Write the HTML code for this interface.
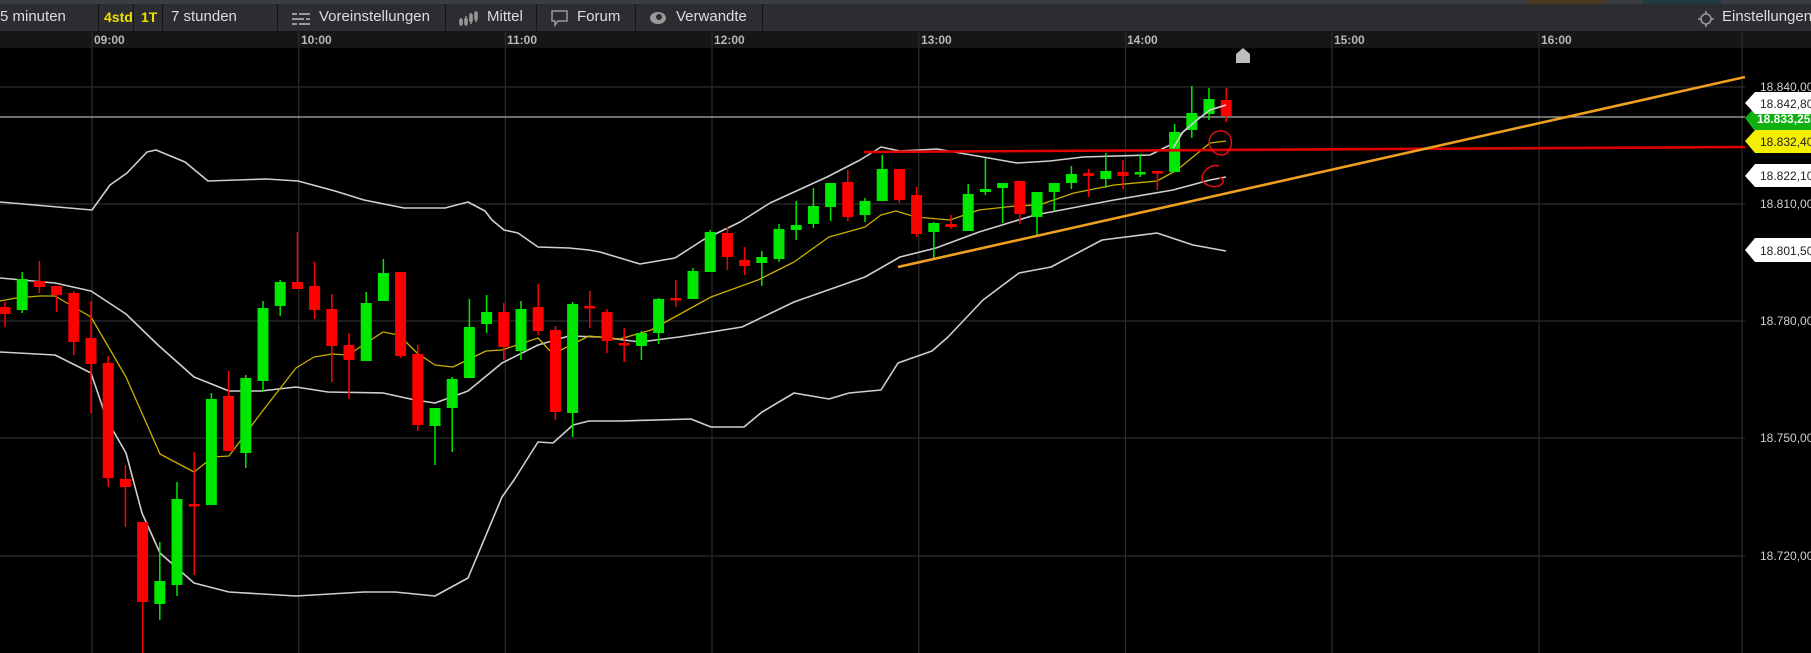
<!DOCTYPE html>
<html><head><meta charset="utf-8"><style>
*{margin:0;padding:0;box-sizing:border-box}
body{width:1811px;height:653px;background:#000;overflow:hidden;position:relative;font-family:"Liberation Sans",sans-serif}
#strip{position:absolute;left:0;top:0;width:1811px;height:4px;background:#3a3d41}
#tb{position:absolute;left:0;top:4px;width:1811px;height:28px;background:#2b2d30;border-bottom:1px solid #151515}
.it{position:absolute;top:0;height:27px;line-height:26px;font-size:15px;color:#dcdcdc;white-space:nowrap}
.sep{position:absolute;top:0;width:1px;height:27px;background:#141414}
#ta{position:absolute;left:0;top:32px;width:1811px;height:16px;background:#161616}
.tl{position:absolute;top:32px;font-size:12px;font-weight:bold;color:#b8b8b8;line-height:16px}
svg{position:absolute;left:0;top:0}
</style></head><body>
<div id="strip"></div>
<div style="position:absolute;left:1528px;top:0;width:78px;height:4px;background:#4a3a22"></div>
<div style="position:absolute;left:1643px;top:0;width:78px;height:4px;background:#1f3a42"></div>
<div id="tb">
<div class="it" style="left:0">5 minuten</div>
<div class="sep" style="left:98px"></div>
<div class="it" style="left:104px;color:#f0e000;font-weight:bold;font-size:14px">4std</div>
<div class="sep" style="left:133px"></div>
<div class="it" style="left:141px;color:#f0e000;font-weight:bold;font-size:14px">1T</div>
<div class="sep" style="left:162px"></div>
<div class="it" style="left:171px">7 stunden</div>
<div class="sep" style="left:277px"></div>
<svg style="left:292px;top:7px" width="20" height="16" viewBox="0 0 20 16"><g stroke="#999" stroke-width="2"><path d="M0 3H18M0 8H18M0 13H18"/></g><g fill="#2b2d30"><rect x="5" y="0" width="2" height="6"/><rect x="12" y="5" width="2" height="6"/><rect x="5" y="10" width="2" height="6"/></g></svg>
<div class="it" style="left:319px">Voreinstellungen</div>
<div class="sep" style="left:445px"></div>
<svg style="left:459px;top:6px" width="20" height="18" viewBox="0 0 20 18"><g stroke="#999" stroke-width="1.5" fill="none"><path d="M2 8V16M7 6V16M12 3V14M17 1V12"/><rect x="1" y="10" width="2" height="4"/><rect x="6" y="9" width="2" height="5"/><rect x="11" y="5" width="2" height="6"/><rect x="16" y="3" width="2" height="6"/></g></svg>
<div class="it" style="left:487px">Mittel</div>
<div class="sep" style="left:536px"></div>
<svg style="left:551px;top:6px" width="18" height="18" viewBox="0 0 18 18"><path d="M1 1H16V11H7L4 15V11H1Z" fill="none" stroke="#999" stroke-width="1.5"/></svg>
<div class="it" style="left:577px">Forum</div>
<div class="sep" style="left:635px"></div>
<svg style="left:649px;top:7px" width="18" height="14" viewBox="0 0 18 14"><ellipse cx="9" cy="7" rx="8" ry="6" fill="#999"/><circle cx="10" cy="6" r="3" fill="#2b2d30"/></svg>
<div class="it" style="left:676px">Verwandte</div>
<div class="sep" style="left:762px"></div>
<svg style="left:1697px;top:6px" width="18" height="18" viewBox="0 0 18 18"><circle cx="9" cy="9" r="5" fill="none" stroke="#999" stroke-width="1.6"/><path d="M9 1V4M9 14V17M1 9H4M14 9H17" stroke="#999" stroke-width="1.6"/></svg>
<div class="it" style="left:1722px">Einstellungen</div>
</div>
<div id="ta"></div>
<div class="tl" style="left:94px">09:00</div>
<div class="tl" style="left:301px">10:00</div>
<div class="tl" style="left:507px">11:00</div>
<div class="tl" style="left:714px">12:00</div>
<div class="tl" style="left:921px">13:00</div>
<div class="tl" style="left:1127px">14:00</div>
<div class="tl" style="left:1334px">15:00</div>
<div class="tl" style="left:1541px">16:00</div>
<svg width="1811" height="653" viewBox="0 0 1811 653" style="top:0">
<g stroke="#2c2c2c" stroke-width="1.2">
<path d="M92 32V653M298.7 32V653M505.4 32V653M712 32V653M918.8 32V653M1125.5 32V653M1332 32V653M1539 32V653M1742 32V653"/>
<path d="M0 87H1745M0 204H1745M0 321H1745M0 438H1745M0 556H1745"/>
</g>
<path d="M0 117H1745" stroke="#b0b0b0" stroke-width="1.2"/>
<g fill="none" stroke-width="1.6" stroke-linejoin="round">
<polyline stroke="#cfcfcf" points="0,202 92,210 110,185 127,173 147,152 156,150 185,162 208,181 266,179 298,181 335,191 364,200 404,208 445,208 468,202 485,211 492,220 504,230 518,233 538,247 569,248 589,250 600,252 640,264 675,258 703,240 740,222 770,203 827,177 860,160 881,147 900,151 937,149 983,157 1017,163 1050,161 1083,157 1150,155 1170,145 1183,132 1197,120 1210,110 1226,105"/>
<polyline stroke="#cfcfcf" points="0,278 55,283 91,291 126,314 158,345 194,377 229,391 261,391 296,387 328,392 383,393 415,400 435,403 468,391 502,363 538,345 569,336 600,337 640,342 679,337 711,332 742,327 794,302 865,277 900,257 936,248 979,232 1035,215 1114,200 1173,190 1210,180 1226,177"/>
<polyline stroke="#cfcfcf" points="0,352 55,355 91,373 107,420 126,453 142,513 160,553 194,583 229,592 296,596 364,592 395,592 435,596 468,578 502,497 514,480 538,442 553,443 573,425 589,421 620,421 691,419 711,427 744,427 762,412 794,393 829,399 849,393 881,390 898,363 932,351 948,337 983,300 1019,273 1051,267 1102,240 1157,233 1193,245 1226,251"/>
<polyline stroke="#c8b000" stroke-width="1.3" points="0,301 16,298 40,296 55,296 91,317 126,377 160,454 194,472 213,457 229,456 261,413 296,368 314,357 332,354 348,355 383,332 399,335 417,353 435,365 453,367 486,351 502,350 538,338 553,354 589,336 620,339 651,330 711,297 758,280 794,262 829,237 865,227 881,215 896,211 916,217 950,220 979,210 1015,206 1039,205 1074,193 1114,185 1157,181 1177,170 1210,143 1226,141"/>
</g>
<g id="c"></g>
<g stroke-width="1.5">
<g stroke="#ff0000" fill="#ff0000">
<path d="M5 302V327M39.4 261V293M56.6 286V312M73.8 291V355M91 301V413M108.2 356V487M125.4 465V527M142.6 522V653M194.2 452V575M228.6 371V451M297.4 232V289M314.6 262V319M331.8 294V382M349 333V399M400.6 272V358M417.8 345V431M503.8 303V360M538.2 284V335M555.4 326V420M589.8 291V328M607 309V353M624.2 328V362M675.8 280V307M727.4 227V270M744.6 247V275M847.8 170V221M899.4 169V203M916.6 187V237M951 215V229M1019.8 181V224M1088.6 169V197M1123 160V189M1157.4 171V190M1226.2 88V122"/>
<g stroke="none">
<rect x="-0.5" y="307" width="11" height="7"/><rect x="33.9" y="281" width="11" height="6"/><rect x="51.1" y="286" width="11" height="9"/><rect x="68.3" y="293" width="11" height="49"/><rect x="85.5" y="338" width="11" height="26"/><rect x="102.7" y="363" width="11" height="115"/><rect x="119.9" y="479" width="11" height="8"/><rect x="137.1" y="522" width="11" height="80"/><rect x="188.7" y="504" width="11" height="2.5"/><rect x="223.1" y="396" width="11" height="55"/><rect x="291.9" y="282" width="11" height="7"/><rect x="309.1" y="286" width="11" height="24"/><rect x="326.3" y="309" width="11" height="37"/><rect x="343.5" y="345" width="11" height="15"/><rect x="395.1" y="272" width="11" height="84"/><rect x="412.3" y="354" width="11" height="71"/><rect x="498.3" y="312" width="11" height="35"/><rect x="532.7" y="307" width="11" height="24"/><rect x="549.9" y="330" width="11" height="82"/><rect x="584.3" y="306" width="11" height="2.5"/><rect x="601.5" y="312" width="11" height="29"/><rect x="618.7" y="343" width="11" height="2.5"/><rect x="670.3" y="298" width="11" height="2.5"/><rect x="721.9" y="233" width="11" height="24"/><rect x="739.1" y="260" width="11" height="6"/><rect x="842.3" y="182" width="11" height="35"/><rect x="893.9" y="169" width="11" height="31"/><rect x="911.1" y="195" width="11" height="39"/><rect x="945.5" y="224" width="11" height="3"/><rect x="1014.3" y="181" width="11" height="33"/><rect x="1083.1" y="173" width="11" height="3"/><rect x="1117.5" y="172" width="11" height="4"/><rect x="1151.9" y="171" width="11" height="2.5"/><rect x="1220.7" y="100" width="11" height="16"/>
</g></g>
<g stroke="#00e800" fill="#00e800">
<path d="M22.2 272V313M159.8 542V620M177 482V596M211.4 393V505M245.8 375V468M263 301V392M280.2 280V316M366.2 292V361M383.4 259V301M435 408V465M452.2 377V452M469.4 299V378M486.6 295V333M521 301V360M572.6 302V437M641.4 331V360M658.6 298V344M693 268V299M710.2 230V272M761.8 251V286M779 224V262M796.2 201V240M813.4 188V228M830.6 183V221M865 198V222M882.2 155V201M933.8 222V258M968.2 184V231M985.4 158V195M1002.6 183V223M1037 192V236M1054.2 183V211M1071.4 166V189M1105.8 153V188M1140.2 154V177M1174.6 124V172M1191.8 86V138M1209 88V120"/>
<g stroke="none">
<rect x="16.7" y="279" width="11" height="31"/><rect x="154.3" y="581" width="11" height="23"/><rect x="171.5" y="499" width="11" height="86"/><rect x="205.9" y="399" width="11" height="106"/><rect x="240.3" y="378" width="11" height="75"/><rect x="257.5" y="308" width="11" height="73"/><rect x="274.7" y="282" width="11" height="24"/><rect x="360.7" y="303" width="11" height="58"/><rect x="377.9" y="273" width="11" height="28"/><rect x="429.5" y="408" width="11" height="18"/><rect x="446.7" y="379" width="11" height="29"/><rect x="463.9" y="327" width="11" height="51"/><rect x="481.1" y="312" width="11" height="12"/><rect x="515.5" y="309" width="11" height="42"/><rect x="567.1" y="304" width="11" height="109"/><rect x="635.9" y="333" width="11" height="13"/><rect x="653.1" y="299" width="11" height="34"/><rect x="687.5" y="271" width="11" height="28"/><rect x="704.7" y="232" width="11" height="40"/><rect x="756.3" y="257" width="11" height="6"/><rect x="773.5" y="229" width="11" height="30"/><rect x="790.7" y="225" width="11" height="5"/><rect x="807.9" y="206" width="11" height="18"/><rect x="825.1" y="183" width="11" height="24"/><rect x="859.5" y="201" width="11" height="14"/><rect x="876.7" y="169" width="11" height="32"/><rect x="928.3" y="223" width="11" height="9"/><rect x="962.7" y="194" width="11" height="37"/><rect x="979.9" y="189" width="11" height="3"/><rect x="997.1" y="183" width="11" height="5"/><rect x="1031.5" y="192" width="11" height="25"/><rect x="1048.7" y="183" width="11" height="9"/><rect x="1065.9" y="174" width="11" height="9"/><rect x="1100.3" y="171" width="11" height="8"/><rect x="1134.7" y="172" width="11" height="2.5"/><rect x="1169.1" y="132" width="11" height="40"/><rect x="1186.3" y="113" width="11" height="17"/><rect x="1203.5" y="99" width="11" height="15"/>
</g></g>
</g>
<polyline fill="none" stroke="#cfcfcf" stroke-width="1.6" points="1173,148 1183,132 1197,120 1210,110 1226,105"/>
<path d="M864 152L1745 147" stroke="#e00000" stroke-width="2.6"/>
<path d="M898 267L1745 77" stroke="#f0a020" stroke-width="2.6"/>
<g fill="none" stroke="#e01010" stroke-width="1.5">
<path d="M1212 150C1205 140 1212 130 1222 131C1232 132 1234 145 1228 152C1224 157 1216 155 1212 150Z"/>
<path d="M1219 166C1212 164 1203 170 1202 177C1202 185 1212 188 1219 186C1225 183 1224 177 1219 178"/>
</g>
<path d="M1236 63V54L1243 48L1250 54V63Z" fill="#bdbdbd"/>
<g font-family="Liberation Sans,sans-serif" font-size="12" fill="#cfcfcf">
<text x="1760" y="91">18.840,00</text><text x="1760" y="208">18.810,00</text><text x="1760" y="325">18.780,00</text><text x="1760" y="442">18.750,00</text><text x="1760" y="560">18.720,00</text>
</g>
<g font-family="Liberation Sans,sans-serif" font-size="12">
<path d="M1745 118L1754 108H1811V130H1754Z" fill="#10b010"/><text x="1757" y="123" fill="#fff" font-weight="bold">18.833,25</text>
<path d="M1745 103L1755 92H1811V114H1755Z" fill="#fff"/><text x="1760" y="108" fill="#222">18.842,80</text>
<path d="M1745 141L1755 130H1811V153H1755Z" fill="#f5ee00"/><text x="1760" y="146" fill="#222">18.832,40</text>
<path d="M1745 176L1755 164H1811V187H1755Z" fill="#fff"/><text x="1760" y="180" fill="#222">18.822,10</text>
<path d="M1745 250L1755 238H1811V262H1755Z" fill="#fff"/><text x="1760" y="255" fill="#222">18.801,50</text>
</g>
</svg>
</body></html>
